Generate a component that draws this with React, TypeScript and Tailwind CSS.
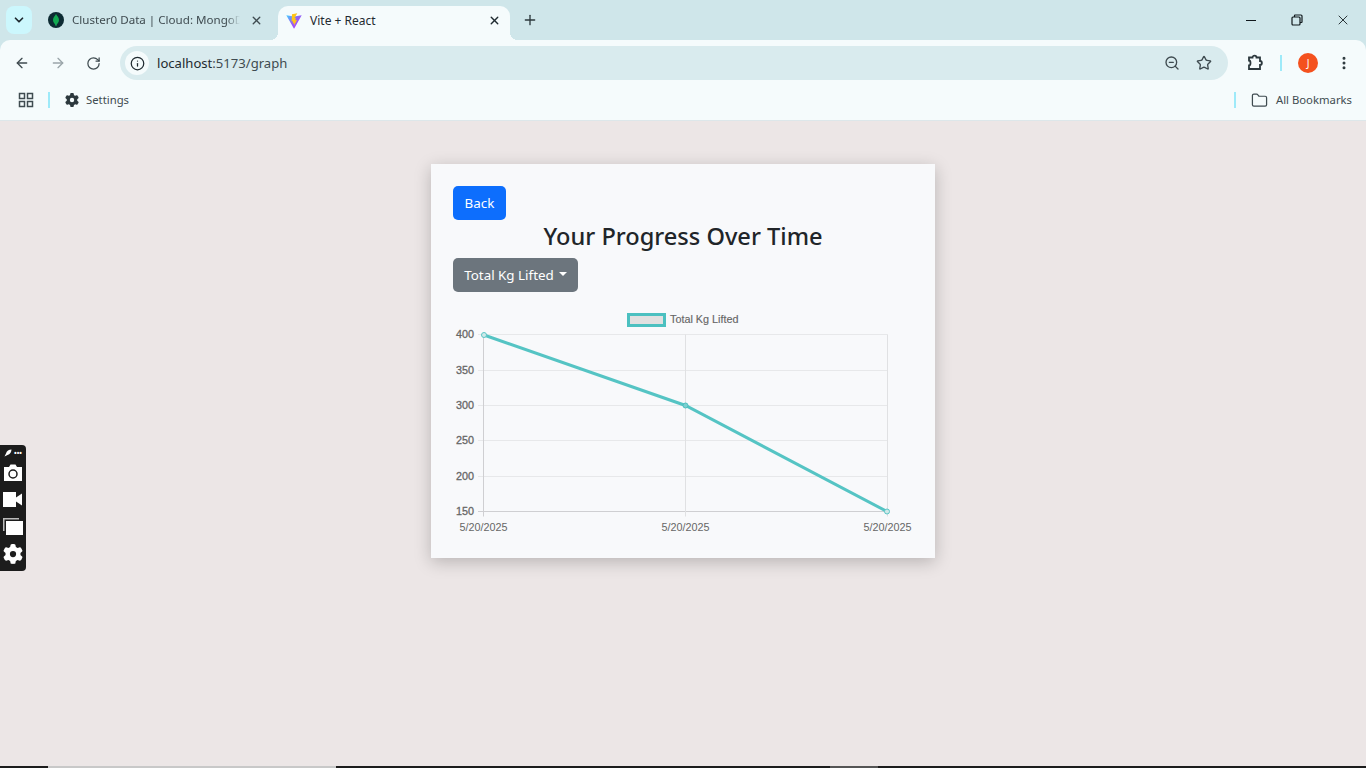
import { ArrowLeft, ArrowRight, ChevronDown, Info, Plus, RotateCw, Star, X, ZoomOut, EllipsisVertical, Folder } from 'lucide-react';
import { FaGear } from 'react-icons/fa6';

const yTicks = [
  { label: '400', y: 334.5 },
  { label: '350', y: 370.5 },
  { label: '300', y: 405.5 },
  { label: '250', y: 440.5 },
  { label: '200', y: 476.5 },
  { label: '150', y: 511.5 },
];

const xTicks = [483.5, 685.5, 887.5];

function Chart() {
  // coordinates are page pixels, the viewBox starts at the chart box corner
  return (
    <svg width="460" height="228" viewBox="453 310 460 228" className="block" style={{ fontFamily: '"Liberation Sans", Arial, sans-serif' }}>
      <rect x="628.5" y="314.5" width="36" height="11" fill="#e0e0e0" stroke="#4bc0c0" strokeWidth="3" />
      <text x="670" y="323" fontSize="10.8" fill="#666" stroke="#666" strokeWidth="0.15">Total Kg Lifted</text>
      {yTicks.map((t, i) => (
        <g key={t.label}>
          <line x1="478" x2="887.5" y1={t.y} y2={t.y} stroke={i === 5 ? '#cfcfd2' : '#e7e8ea'} strokeWidth="1" />
          <text x="474" y={t.y + 3} fontSize="10.8" fill="#666" textAnchor="end" stroke="#666" strokeWidth="0.3">{t.label}</text>
        </g>
      ))}
      {xTicks.map((x, i) => (
        <g key={x}>
          <line x1={x} x2={x} y1="334.5" y2="516.5" stroke={i === 0 ? '#cfcfd2' : '#e0e1e3'} strokeWidth="1" />
          <text x={x} y="531" fontSize="10.8" fill="#666" textAnchor="middle">5/20/2025</text>
        </g>
      ))}
      <polyline points="484,335 685.5,405.5 887,511.5" fill="none" stroke="#55c4c4" strokeWidth="3" />
      <circle cx="484" cy="335" r="2.5" fill="#cfe9e9" stroke="#5cc6c6" strokeWidth="1" />
      <circle cx="685.5" cy="405.5" r="2.5" fill="#7ccfcf" stroke="#4bc0c0" strokeWidth="1" />
      <circle cx="887" cy="511.5" r="2.5" fill="#cfe9e9" stroke="#5cc6c6" strokeWidth="1" />
    </svg>
  );
}

function MongoIcon() {
  return (
    <div className="flex h-4 w-4 shrink-0 items-center justify-center rounded-full bg-[#0d2b33]">
      <svg width="8" height="12" viewBox="0 0 8 12">
        <path d="M4 0C5 2 7 3.500 7 6C7 8.500 5 9.500 4.300 12H3.700C3 9.500 1 8.500 1 6C1 3.500 3 2 4 0Z" fill="#13aa52" />
      </svg>
    </div>
  );
}

function ViteIcon() {
  return (
    <svg width="16" height="16" viewBox="0 0 16 16">
      <defs>
        <linearGradient id="viteBody" x1="0" y1="0" x2="1" y2="1">
          <stop offset="0" stopColor="#41d1ff" />
          <stop offset="0.45" stopColor="#8f63f5" />
          <stop offset="1" stopColor="#bd34fe" />
        </linearGradient>
      </defs>
      <path d="M0.300 2.300L7.700 15.300C7.900 15.600 8.200 15.600 8.400 15.300L15.700 2.300L8 3.600Z" fill="url(#viteBody)" />
      <path d="M11.300 0.300L6 1.300L5.600 8.500L7 8.200L6.800 10.600L8.300 10.200L7.900 13L11 7L9.300 7.300L9.900 5L8.400 5.300Z" fill="#ffc517" />
    </svg>
  );
}

function BrowserChrome() {
  return (
    <header className="flex flex-col bg-[#cfe6ea] font-['Noto_Sans',sans-serif]">
      <div className="flex h-10 items-end pl-[6px]">
        <div className="mb-[6px] flex h-7 w-[26px] items-center justify-center rounded-lg bg-[#ccf7fd]">
          <ChevronDown size={14} strokeWidth={3} className="text-[#1f2a30]" />
        </div>
        <div className="mb-[6px] ml-[4px] flex h-7 w-[242px] items-center pl-[12px] pr-[15px]">
          <MongoIcon />
          <span className="ml-2 w-[168px] overflow-hidden whitespace-nowrap text-[11.6px] text-[#3f4b50] [mask-image:linear-gradient(to_right,black_92%,transparent)]">Cluster0 Data | Cloud: MongoDB Cloud</span>
          <X size={13} strokeWidth={2.5} className="ml-auto text-[#3f4b50]" />
        </div>
        <div className="relative flex h-[34px] w-[232px] items-center rounded-t-[10px] bg-[#f5fbfc] pb-[5px] pl-[8px] pr-[9px]">
          <span className="absolute bottom-0 left-[-8px] h-2 w-2 bg-[radial-gradient(circle_at_0_0,transparent_8px,#f5fbfc_8px)]" />
          <span className="absolute bottom-0 right-[-8px] h-2 w-2 bg-[radial-gradient(circle_at_100%_0,transparent_8px,#f5fbfc_8px)]" />
          <ViteIcon />
          <span className="ml-2 text-[12px] text-[#1f2a30]">Vite + React</span>
          <X size={13} strokeWidth={2.5} className="ml-auto text-[#1f2a30]" />
        </div>
        <div className="mb-[6px] ml-[6px] flex h-7 w-7 items-center justify-center">
          <Plus size={16} strokeWidth={2} className="text-[#2c383d]" />
        </div>
        <div className="mb-[6px] ml-auto flex h-7 items-center text-[#10181c]">
          <div className="flex w-[46px] justify-center"><span className="h-px w-[10px] bg-[#10181c]" /></div>
          <div className="flex w-[46px] justify-center">
            <svg width="12" height="12" viewBox="0 0 12 12" fill="none" stroke="currentColor" strokeWidth="1.2">
              <rect x="1" y="3" width="8" height="8" rx="1" />
              <path d="M3.500 3V1.500C3.500 1.200 3.700 1 4 1H10C10.600 1 11 1.400 11 2V8C11 8.300 10.800 8.500 10.500 8.500H9" />
            </svg>
          </div>
          <div className="flex w-[46px] justify-center"><X size={16} strokeWidth={1.3} /></div>
        </div>
      </div>
      <div className="flex h-[46px] items-center rounded-t-[10px] bg-[#f5fbfc] pl-[14px] pr-[11px] text-[#3f4b50]">
        <ArrowLeft size={16} strokeWidth={2} />
        <ArrowRight size={16} strokeWidth={2} className="ml-[20px] text-[#9aa5a9]" />
        <RotateCw size={15} strokeWidth={2} className="ml-[20px]" />
        <div className="ml-[19px] flex h-[34px] w-[1108px] items-center rounded-full bg-[#d9ebee] pl-[5px] pr-[16px]">
          <div className="flex h-[24px] w-[24px] items-center justify-center rounded-full bg-[#f5fbfc]">
            <Info size={15} strokeWidth={2} className="text-[#1f2a30]" />
          </div>
          <span className="ml-[8px] pt-[1px] text-[13.1px] text-[#3f4b50]"><span className="text-[#1f2a30]">localhost</span>:5173/graph</span>
          <ZoomOut size={16} strokeWidth={2} className="ml-auto" />
          <Star size={16} strokeWidth={2} className="ml-[16px]" />
        </div>
        <svg width="18" height="18" viewBox="0 0 18 18" fill="none" stroke="#2c383d" strokeWidth="1.8" className="ml-[18px]">
          <path d="M3 3.500H6.500C6.500 1 10.500 1 10.500 3.500H14V7C16.500 7 16.500 11 14 11V15H3V11.500C5 11.500 5 6.500 3 6.500Z" />
        </svg>
        <div className="ml-[16px] h-4 w-[2px] bg-[#9eeaf9]" />
        <div className="ml-[16px] flex h-5 w-5 items-center justify-center rounded-full bg-[#f4511e] text-[10px] text-white">J</div>
        <EllipsisVertical size={16} strokeWidth={2.5} className="ml-[18px] text-[#2c383d]" />
      </div>
      <div className="flex h-[35px] items-center border-b border-[#dde7ea] bg-[#f5fbfc] pb-[6px] pl-[18px] pr-[14px] text-[#3f4b50]">
        <svg width="16" height="16" viewBox="0 0 16 16" fill="none" stroke="#3f4b50" strokeWidth="1.5">
          <rect x="1.500" y="1.500" width="5" height="5" />
          <rect x="9.500" y="1.500" width="5" height="5" />
          <rect x="1.500" y="9.500" width="5" height="5" />
          <rect x="9.500" y="9.500" width="5" height="5" />
        </svg>
        <div className="ml-[14px] h-4 w-[2px] bg-[#9eeaf9]" />
        <FaGear size={14} className="ml-[15px] text-[#2c383d]" />
        <span className="ml-[7px] text-[11.3px]">Settings</span>
        <div className="ml-auto h-4 w-[2px] bg-[#9eeaf9]" />
        <Folder size={17} strokeWidth={1.75} className="ml-[15px]" />
        <span className="ml-[8px] text-[11.3px]">All Bookmarks</span>
      </div>
    </header>
  );
}

function RecorderWidget() {
  return (
    <div className="absolute left-0 top-[445px] flex h-[126px] w-[26px] flex-col items-center rounded-r-[4px] bg-[#1c1c1c] pt-[3px]">
      <div className="flex h-[10px] items-center gap-[2px] text-white">
        <svg width="8" height="8" viewBox="0 0 8 8">
          <path d="M0.500 7.500L2 4.500C2.500 2 5 0.500 7.500 0.500C7.500 3 6 5.500 3.500 6Z" fill="#fff" />
        </svg>
        <span className="text-[7px] font-bold leading-none">•••</span>
      </div>
      <svg width="20" height="18" viewBox="0 0 20 18" className="mt-[6px]">
        <path d="M1 3H6L7.500 0.500H12.500L14 3H19V17H1Z" fill="#fff" />
        <circle cx="10" cy="10" r="4" fill="none" stroke="#1c1c1c" strokeWidth="1.500" />
      </svg>
      <svg width="20" height="15" viewBox="0 0 20 15" className="mt-[10px]">
        <path d="M0 0H13V5.500L19 1.500V13.500L13 9.500V15H0Z" fill="#fff" />
      </svg>
      <svg width="20" height="19" viewBox="0 0 20 19" className="mt-[9px]">
        <path d="M0 2H16V3.500H1.500V15H0Z" fill="#bbb" />
        <rect x="3" y="5" width="17" height="14" fill="#fff" />
      </svg>
      <FaGear size={20} className="mt-[9px] text-white" />
    </div>
  );
}

export default function App() {
  return (
    <div className="relative flex h-[768px] flex-col overflow-hidden bg-[#ece6e6]">
      <BrowserChrome />
      <main className="flex flex-1 justify-center pt-[43px]">
        <section className="h-[394px] w-[504px] bg-[#f8f9fb] px-[22px] pt-[22px] shadow-[0_4px_16px_rgba(0,0,0,0.22)] font-['Noto_Sans',sans-serif]">
          <button type="button" className="block h-[34px] w-[53px] rounded-[5px] bg-[#0d6efd] text-[13.4px] text-white">Back</button>
          <h2 className="mt-0 text-center text-[23.6px] font-medium leading-[32px] text-[#212529]">Your Progress Over Time</h2>
          <button type="button" className="mt-[6px] flex h-[34px] w-[125px] items-center justify-center rounded-[5px] bg-[#6c757d] text-[13.4px] text-white">
            Total Kg Lifted
            <span className="ml-[5px] mt-[-2px] h-0 w-0 border-x-[4px] border-t-[4px] border-x-transparent border-t-white" />
          </button>
          <div className="mt-[18px]">
            <Chart />
          </div>
        </section>
      </main>
      <footer className="flex h-[2px] bg-[#1c1c1c]">
        <div className="ml-[48px] w-[288px] bg-[#c8c8c8]" />
        <div className="ml-[494px] w-[48px] bg-[#555]" />
      </footer>
      <RecorderWidget />
    </div>
  );
}
